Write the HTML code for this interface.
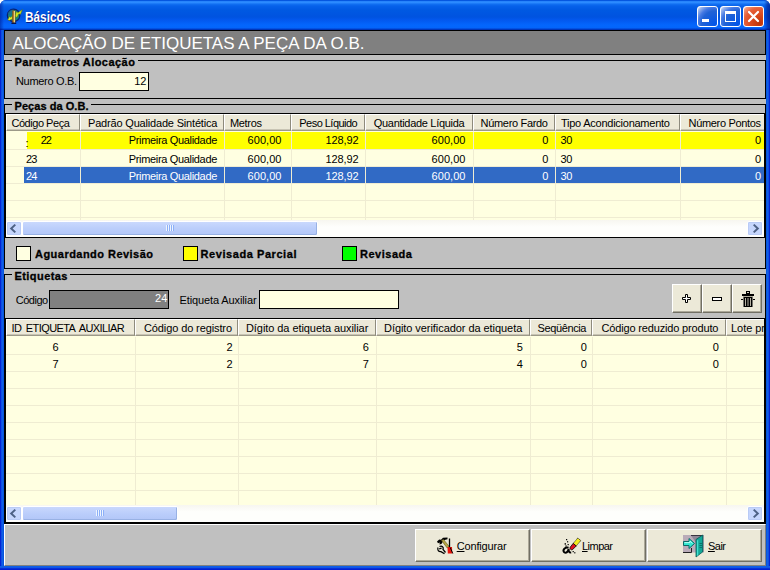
<!DOCTYPE html>
<html><head><meta charset="utf-8"><style>*{box-sizing:border-box;margin:0;padding:0}
html,body{width:770px;height:570px;overflow:hidden;background:#fff;font-family:"Liberation Sans",sans-serif;font-size:11px;color:#000}
div,span,i,svg{position:absolute}
svg{left:0;top:0}
#win{left:0;top:0;width:770px;height:570px;overflow:hidden;border-radius:6px 6px 0 0;background:linear-gradient(90deg,#0019cf 0,#0831d9 1px,#166aee 2px,#0855dd 3px,#0855dd 4px,#0855dd 766px,#0855dd 767px,#166aee 768px,#0831d9 769px,#0019cf 770px)}
#bb{left:0;top:566px;width:770px;height:4px;background:linear-gradient(180deg,#0855dd 0,#166aee 1px,#0831d9 2.5px,#0019cf 4px)}
#tb{left:0;top:0;width:770px;height:30px;
background:linear-gradient(180deg,#0050d8 0,#0a5ee8 1px,#2d8cff 1.6px,#2b8aff 2.8px,#1270f2 4px,#0661ea 6px,#0059e2 10px,#0053e0 17px,#0358ee 20px,#0466fd 25px,#0465fb 27.5px,#0350e0 28.6px,#0038c0 29.4px,#002ca8 30px)}
#tt{left:24.5px;top:9px;color:#fff;font-weight:bold;font-size:14px;line-height:16px;transform:scaleX(.845);transform-origin:0 0;text-shadow:1px 1px 0 #0a1883;white-space:nowrap}
#body{left:4px;top:30px;width:762px;height:536px;background:#c0c0c0}
.wb{top:6px;width:21px;height:21px;border:1px solid #fff;border-radius:3px;
background:radial-gradient(circle at 90% 90%,#0054e9 0,#2263d5 55%,#4479e4 70%,#a3bbec 90%,#fff 100%)}
.wb.x{background:radial-gradient(circle at 80% 85%,#bf3408 0,#dc4a1e 40%,#e6603a 68%,#f29a7c 90%,#fff 100%)}
#banner{left:4px;top:30px;width:762px;height:25px;background:#808080;border:1px solid #000}
#banner span{left:7.5px;top:3px;color:#fff;font-size:17px;letter-spacing:-0.03px;white-space:nowrap}
.ln{background:#000}
.glb{height:5px;background:#c0c0c0}
.t{white-space:nowrap;line-height:13px}
.inp{border:1px solid #000;background:#ffffe1}
.grid{background:#ffffe1;overflow:hidden}
.hd{top:0;height:17px;background:#ece9d8;border:1px solid;border-color:#fff #8e8b7d #9c9988 #fff;box-shadow:inset 0 -1px 0 #c8c4b4}
.vl{width:1px;background:#efecd2}
.hl{height:1px;background:#efecd2;left:0;width:760px}
.btn{background:#ece9d8;border:1px solid;border-color:#fff #716f64 #716f64 #fff;box-shadow:inset -1px -1px 0 #aca899}
.sb{background:linear-gradient(180deg,#f7f6f0 0,#fefefc 40%,#fefefc 100%);height:17px}
.sbb{width:16px;height:15px;top:1px;background:#c6d6fd;border:1px solid #fff;border-radius:2px;box-shadow:inset 0 0 0 1px #b9cbf6}
.th{top:1px;height:15px;background:linear-gradient(180deg,#c9d8fd 0,#bbcefb 50%,#b2c6f8 100%);border:1px solid #fff;border-radius:2px;box-shadow:inset -1px -1px 0 #98b1e4}
.th i{top:3px;width:8px;height:6px;background:repeating-linear-gradient(90deg,#eef4fe 0,#eef4fe 1px,#8cb0f8 1px,#8cb0f8 2px)}
#tbr{left:764px;top:0;width:6px;height:30px;background:linear-gradient(90deg,rgba(0,10,120,0) 0,rgba(0,10,120,.45) 60%,rgba(0,10,110,.6) 100%)}
#tbl{left:0;top:0;width:4px;height:30px;background:linear-gradient(90deg,rgba(0,10,120,.45) 0,rgba(0,10,120,0) 100%)}
</style></head><body>
<div id="win">
<div id="tb"><div id="tbr"></div><div id="tbl"></div><div id="tt">Básicos</div>
<svg style="left:5px;top:7px" width="20" height="18">
<circle cx="8.6" cy="8.4" r="6.2" fill="#14877a" stroke="#0a2070" stroke-width="1.3"/>
<path d="M8.5 2.4 A6.2 6.2 0 0 0 2.6 7 L6 9 Z" fill="#1a6a98" opacity=".7"/>
<path d="M10.2 8.6 L11.2 4.8 L13.2 5.6 L17.4 2.6 L15.6 7.2 L13.6 7 L12.4 9.8 L10.6 10.4 Z" fill="#cfe61e" stroke="#4a6a10" stroke-width=".5"/>
<path d="M2.6 12.8 L4.6 9.4 L5.8 10.6 L7.6 8.6 L7.6 12.2 L5.8 12.4 L4.8 13.6 Z" fill="#e2ee2c" stroke="#4a6a10" stroke-width=".5"/>
<path d="M7.3 3.4 h3 v12.8 h-3 z" fill="#96540f"/><path d="M9.3 4 v12" stroke="#f4e48c" stroke-width="1.2"/>
<path d="M6.4 16.3 h4.8" stroke="#08154a" stroke-width="1.5"/>
</svg>
<div class="wb" style="left:697px"><svg width="19" height="19"><rect x="4" y="12" width="7" height="3" fill="#fff"/></svg></div>
<div class="wb" style="left:720px"><svg width="19" height="19"><rect x="4.5" y="5.5" width="10" height="9" fill="none" stroke="#fff" stroke-width="1"/><rect x="4" y="4" width="11" height="3" fill="#fff"/></svg></div>
<div class="wb x" style="left:743px"><svg width="19" height="19"><path d="M5 5 L14 14 M14 5 L5 14" stroke="#fff" stroke-width="2.2" stroke-linecap="round"/></svg></div>
</div>

<div id="bb"></div><div id="body"></div>
<div id="banner"><span>ALOCAÇÃO DE ETIQUETAS A PEÇA DA O.B.</span></div>
<div class="ln" style="left:4px;top:60px;width:762px;height:1px"></div>
<div class="ln" style="left:4px;top:60px;width:1px;height:39px"></div>
<div class="ln" style="left:765px;top:60px;width:1px;height:39px"></div>
<div class="ln" style="left:4px;top:98px;width:762px;height:1px"></div>
<div class="glb" style="left:12px;top:58px;width:126px"></div>
<span class="t" style="top:56px;letter-spacing:0.46px;left:14.5px;font-weight:bold;-webkit-text-stroke:.3px #000;">Parametros Alocação</span>
<span class="t" style="top:75px;letter-spacing:-0.32px;left:16px;">Numero O.B.</span>
<div class="inp" style="left:79px;top:72px;width:70px;height:19px"></div>
<span class="t" style="top:75px;right:623.50px;">12</span>
<div class="ln" style="left:4px;top:104px;width:762px;height:1px"></div>
<div class="ln" style="left:4px;top:104px;width:1px;height:165px"></div>
<div class="ln" style="left:765px;top:104px;width:1px;height:165px"></div>
<div class="ln" style="left:4px;top:268px;width:762px;height:1px"></div>
<div class="glb" style="left:12px;top:102px;width:79px"></div>
<span class="t" style="top:100px;letter-spacing:0.05px;left:14.5px;font-weight:bold;-webkit-text-stroke:.3px #000;">Peças da O.B.</span>
<div style="left:5px;top:113px;width:760px;height:125px;border:1px solid #000"></div>
<div class="grid" style="left:6px;top:114px;width:758px;height:123px">
<div class="hd" style="left:0px;width:74px"></div>
<div class="hd" style="left:74px;width:144px"></div>
<div class="hd" style="left:218px;width:67px"></div>
<div class="hd" style="left:285px;width:74px"></div>
<div class="hd" style="left:359px;width:108px"></div>
<div class="hd" style="left:467px;width:82px"></div>
<div class="hd" style="left:549px;width:125px"></div>
<div class="hd" style="left:674px;width:85px"></div>
<div style="left:21px;top:18px;width:740px;height:17px;background:#ffff00"></div>
<div style="left:18px;top:53px;width:743px;height:16px;background:#316ac5"></div>
<div class="vl" style="left:74px;top:18px;height:90px"></div>
<div class="vl" style="left:218px;top:18px;height:90px"></div>
<div class="vl" style="left:285px;top:18px;height:90px"></div>
<div class="vl" style="left:359px;top:18px;height:90px"></div>
<div class="vl" style="left:467px;top:18px;height:90px"></div>
<div class="vl" style="left:549px;top:18px;height:90px"></div>
<div class="vl" style="left:674px;top:18px;height:90px"></div>
<div class="hl" style="top:35px"></div>
<div class="hl" style="top:52px"></div>
<div class="hl" style="top:69px"></div>
<div class="hl" style="top:86px"></div>
<div class="hl" style="top:103px"></div>
<div class="sb" style="left:0;top:106px;width:758px"><div class="sbb" style="left:0px"><svg width="14" height="14"><path d="M8.3 2.6 L4.2 6.5 L8.3 10.4" fill="none" stroke="#4d6185" stroke-width="2"/></svg></div><div class="th" style="left:16px;width:296px"><i style="left:143px"></i></div><div class="sbb" style="left:741px"><svg width="14" height="14"><path d="M5.7 2.6 L9.8 6.5 L5.7 10.4" fill="none" stroke="#4d6185" stroke-width="2"/></svg></div></div>
</div>
<span class="t" style="top:117px;letter-spacing:-0.47px;left:11.5px;">Código Peça</span>
<span class="t" style="top:117px;letter-spacing:-0.18px;left:88px;">Padrão Qualidade Sintética</span>
<span class="t" style="top:117px;letter-spacing:-0.33px;left:230px;">Metros</span>
<span class="t" style="top:117px;letter-spacing:-0.53px;left:299.3px;">Peso Líquido</span>
<span class="t" style="top:117px;letter-spacing:-0.31px;left:373.8px;">Quantidade Líquida</span>
<span class="t" style="top:117px;letter-spacing:-0.32px;left:480.6px;">Número Fardo</span>
<span class="t" style="top:117px;letter-spacing:-0.25px;left:561px;">Tipo Acondicionamento</span>
<span class="t" style="top:117px;letter-spacing:-0.34px;left:688.6px;">Número Pontos</span>
<span class="t" style="top:134px;letter-spacing:-0.95px;left:40.7px;">22</span>
<span class="t" style="top:134px;letter-spacing:-0.33px;right:553.03px;">Primeira Qualidade</span>
<span class="t" style="top:134px;letter-spacing:0.06px;right:488.44px;">600,00</span>
<span class="t" style="top:134px;letter-spacing:-0.14px;right:411.64px;">128,92</span>
<span class="t" style="top:134px;letter-spacing:0.06px;right:304.44px;">600,00</span>
<span class="t" style="top:134px;right:221.70px;">0</span>
<span class="t" style="top:134px;letter-spacing:-0.55px;left:560.6px;">30</span>
<span class="t" style="top:134px;right:9.00px;">0</span>
<span class="t" style="top:153px;letter-spacing:-0.95px;left:26px;">23</span>
<span class="t" style="top:153px;letter-spacing:-0.33px;right:553.03px;">Primeira Qualidade</span>
<span class="t" style="top:153px;letter-spacing:0.06px;right:488.44px;">600,00</span>
<span class="t" style="top:153px;letter-spacing:-0.14px;right:411.64px;">128,92</span>
<span class="t" style="top:153px;letter-spacing:0.06px;right:304.44px;">600,00</span>
<span class="t" style="top:153px;right:221.70px;">0</span>
<span class="t" style="top:153px;letter-spacing:-0.55px;left:560.6px;">30</span>
<span class="t" style="top:153px;right:9.00px;">0</span>
<span class="t" style="top:170px;letter-spacing:-0.95px;left:26px;color:#fff;">24</span>
<span class="t" style="top:170px;letter-spacing:-0.33px;right:553.03px;color:#fff;">Primeira Qualidade</span>
<span class="t" style="top:170px;letter-spacing:0.06px;right:488.44px;color:#fff;">600,00</span>
<span class="t" style="top:170px;letter-spacing:-0.14px;right:411.64px;color:#fff;">128,92</span>
<span class="t" style="top:170px;letter-spacing:0.06px;right:304.44px;color:#fff;">600,00</span>
<span class="t" style="top:170px;right:221.70px;color:#fff;">0</span>
<span class="t" style="top:170px;letter-spacing:-0.55px;left:560.6px;color:#fff;">30</span>
<span class="t" style="top:170px;right:9.00px;color:#fff;">0</span>
<span class="t" style="top:137px;left:25.5px;">:</span>
<div style="left:16px;top:246px;width:15px;height:15px;border:1px solid #000;background:#ffffe1"></div>
<span class="t" style="top:248px;letter-spacing:0.47px;left:35px;font-weight:bold;-webkit-text-stroke:.3px #000;">Aguardando Revisão</span>
<div style="left:183px;top:246px;width:15px;height:15px;border:1px solid #000;background:#ffff00"></div>
<span class="t" style="top:248px;letter-spacing:0.56px;left:200.6px;font-weight:bold;-webkit-text-stroke:.3px #000;">Revisada Parcial</span>
<div style="left:342px;top:246px;width:15px;height:15px;border:1px solid #000;background:#00ff00"></div>
<span class="t" style="top:248px;letter-spacing:0.52px;left:360px;font-weight:bold;-webkit-text-stroke:.3px #000;">Revisada</span>
<div class="ln" style="left:4px;top:274px;width:762px;height:1px"></div>
<div class="ln" style="left:4px;top:274px;width:1px;height:250px"></div>
<div class="ln" style="left:765px;top:274px;width:1px;height:250px"></div>
<div class="ln" style="left:4px;top:523px;width:762px;height:1px"></div>
<div class="glb" style="left:12px;top:272px;width:58px"></div>
<span class="t" style="top:270px;letter-spacing:0.43px;left:14.5px;font-weight:bold;-webkit-text-stroke:.3px #000;">Etiquetas</span>
<span class="t" style="top:294px;letter-spacing:-0.50px;left:15.8px;">Código</span>
<div style="left:49px;top:290px;width:120px;height:19px;border:1px solid #000;background:#808080"></div>
<span class="t" style="top:292px;right:602.70px;color:#fff;">24</span>
<span class="t" style="top:294px;letter-spacing:-0.12px;left:179.6px;">Etiqueta Auxiliar</span>
<div class="inp" style="left:259px;top:290px;width:140px;height:19px"></div>
<div class="btn" style="left:672px;top:284px;width:30px;height:29px"></div>
<div class="btn" style="left:702px;top:284px;width:30px;height:29px"></div>
<div class="btn" style="left:732px;top:284px;width:30px;height:29px"></div>
<svg style="left:682px;top:294px" width="10" height="10"><path d="M3.5 .5h2v3h3v2h-3v3h-2v-3h-3v-2h3z" fill="#fff" stroke="#000" stroke-width="1"/></svg>
<svg style="left:712px;top:297px" width="10" height="4"><rect x=".5" y=".5" width="9" height="3" fill="#fff" stroke="#000"/></svg>
<svg style="left:741px;top:290px" width="14" height="18"><rect x="5" y="1" width="4" height="3" fill="#000"/><rect x="6" y="2" width="2" height="1" fill="#d8d4c4"/><rect x="1" y="4" width="12" height="2" fill="#000"/><rect x="2" y="6" width="10" height="1" fill="#b0ac9c"/><rect x="2.5" y="7" width="9" height="10" fill="#000"/><path d="M4.5 8v8M7 8v8M9.5 8v8" stroke="#c8c4b4" stroke-width=".9"/><rect x="0" y="9" width="2" height="1" fill="#000"/><rect x="12" y="9" width="2" height="1" fill="#000"/></svg>

<div style="left:5px;top:318px;width:760px;height:205px;border:1px solid #000"></div>
<div class="grid" style="left:6px;top:319px;width:758px;height:203px">
<div class="hd" style="left:0px;width:129px"></div>
<div class="hd" style="left:129px;width:103px"></div>
<div class="hd" style="left:232px;width:138px"></div>
<div class="hd" style="left:370px;width:154px"></div>
<div class="hd" style="left:524px;width:62px"></div>
<div class="hd" style="left:586px;width:134px"></div>
<div class="hd" style="left:720px;width:39px"></div>
<div class="vl" style="left:129px;top:18px;height:169px"></div>
<div class="vl" style="left:232px;top:18px;height:169px"></div>
<div class="vl" style="left:370px;top:18px;height:169px"></div>
<div class="vl" style="left:524px;top:18px;height:169px"></div>
<div class="vl" style="left:586px;top:18px;height:169px"></div>
<div class="vl" style="left:720px;top:18px;height:169px"></div>
<div class="hl" style="top:35px"></div>
<div class="hl" style="top:52px"></div>
<div class="hl" style="top:69px"></div>
<div class="hl" style="top:86px"></div>
<div class="hl" style="top:103px"></div>
<div class="hl" style="top:120px"></div>
<div class="hl" style="top:137px"></div>
<div class="hl" style="top:154px"></div>
<div class="hl" style="top:171px"></div>
<div class="sb" style="left:0;top:186px;width:758px"><div class="sbb" style="left:0px"><svg width="14" height="14"><path d="M8.3 2.6 L4.2 6.5 L8.3 10.4" fill="none" stroke="#4d6185" stroke-width="2"/></svg></div><div class="th" style="left:16px;width:156px"><i style="left:73px"></i></div><div class="sbb" style="left:741px"><svg width="14" height="14"><path d="M5.7 2.6 L9.8 6.5 L5.7 10.4" fill="none" stroke="#4d6185" stroke-width="2"/></svg></div></div>
</div>
<span class="t" style="top:322px;word-spacing:2px;letter-spacing:-0.58px;left:11.5px;">ID ETIQUETA AUXILIAR</span>
<span class="t" style="top:322px;letter-spacing:-0.11px;left:144px;">Código do registro</span>
<span class="t" style="top:322px;letter-spacing:-0.07px;left:246px;">Dígito da etiqueta auxiliar</span>
<span class="t" style="top:322px;letter-spacing:-0.06px;left:384px;">Dígito verificador da etiqueta</span>
<span class="t" style="top:322px;letter-spacing:-0.38px;left:537.5px;">Seqüência</span>
<span class="t" style="top:322px;letter-spacing:-0.16px;left:601.5px;">Código reduzido produto</span>
<span class="t" style="top:322px;letter-spacing:-0.05px;left:731px;">Lote pr</span>
<span class="t" style="top:341px;left:52.5px;">6</span>
<span class="t" style="top:341px;right:537.50px;">2</span>
<span class="t" style="top:341px;right:401.20px;">6</span>
<span class="t" style="top:341px;right:247.20px;">5</span>
<span class="t" style="top:341px;right:183.20px;">0</span>
<span class="t" style="top:341px;right:51.20px;">0</span>
<span class="t" style="top:358px;left:52.5px;">7</span>
<span class="t" style="top:358px;right:537.50px;">2</span>
<span class="t" style="top:358px;right:401.20px;">7</span>
<span class="t" style="top:358px;right:247.20px;">4</span>
<span class="t" style="top:358px;right:183.20px;">0</span>
<span class="t" style="top:358px;right:51.20px;">0</span>
<div style="left:4px;top:524px;width:762px;height:42px;border:1px solid;border-color:#fff #808080 #808080 #fff"></div>
<div class="btn" style="left:415px;top:529px;width:115px;height:33px"></div>
<span class="t" style="top:540px;letter-spacing:-0.15px;left:456.7px;"><u>C</u>onfigurar</span>
<div class="btn" style="left:531px;top:529px;width:115px;height:33px"></div>
<span class="t" style="top:540px;letter-spacing:-0.53px;left:582px;"><u>L</u>impar</span>
<div class="btn" style="left:647px;top:529px;width:115px;height:33px"></div>
<span class="t" style="top:540px;letter-spacing:-0.52px;left:708px;"><u>S</u>air</span>
<svg style="left:436px;top:536px" width="18" height="19">
<path d="M1 5.6 L3.2 3.4 L5 3.8 L7 1.8 L11.5 1.4 L11.5 3.2 L8.6 4 L7 5.4 L5.4 8 L3.4 8.6 L3.8 6.6 L2 7.2 Z" fill="#000"/>
<path d="M5.5 4.5 L7.5 3.5 L13.2 10.5 L11.2 12 Z" fill="#b5a642" stroke="#5a5220" stroke-width=".6"/>
<path d="M13.5 2.5 V11" stroke="#000" stroke-width="1.3"/>
<path d="M11.5 11 H16 L16.3 17.5 H11.8 Z" fill="#e8140c"/><path d="M14.2 11.5 L16.8 17.5" stroke="#000" stroke-width="1"/>
<path d="M2 11.5 C1.2 14 2.5 15.8 5 15.6 L8.5 17.8 M3.5 10.5 C6 9.5 8 11 7 13.5 L9.5 16.5 M3.2 12.8 L5.6 12.2" fill="none" stroke="#000" stroke-width="1.3"/>
</svg>
<svg style="left:561px;top:536px" width="22" height="19">
<path d="M16.8 2 L19.8 4.6 L15.2 10 L12.2 7.4 Z" fill="#f4ec20" stroke="#000" stroke-width=".8" stroke-dasharray="1 .6"/>
<path d="M12.2 7.4 L15.2 10 L11.6 13.6 C10.4 14.6 8.2 12.6 9.2 11.2 Z" fill="#e01020" stroke="#000" stroke-width=".8"/>
<path d="M7.6 11.6 C3.6 10.6 1.4 14.6 3.2 16.2 C5.2 17.6 7.2 15.6 7.6 13 C7.6 15.4 8 16.6 10.2 16.4" fill="none" stroke="#000" stroke-width="2"/>
<rect x="5" y="3" width="1.2" height="1.2" fill="#000"/><rect x="6" y="5.2" width="1.2" height="1.2" fill="#000"/><rect x="3.6" y="7.2" width="1.4" height="1.4" fill="#000"/><rect x="6.6" y="8" width="1.2" height="1.2" fill="#000"/><rect x="4.4" y="9.4" width="1.3" height="1.3" fill="#000"/>
<rect x="11.6" y="15" width="1.2" height="1.2" fill="#000"/><rect x="13.2" y="16.2" width="1.2" height="1.2" fill="#000"/>
</svg>
<svg style="left:682px;top:534px" width="23" height="24">
<rect x="1" y="1" width="21" height="17.5" fill="#b9abb9"/>
<path d="M9 1.5 H20.5 V18" fill="#8f8896" stroke="#3a3440" stroke-width="1"/>
<path d="M1 18.5 H9.5 V14" fill="none" stroke="#222" stroke-width="1"/>
<path d="M14 5.5 L20.8 1 V17.8 L14 23 Z" fill="#12a898" stroke="#0a5a55" stroke-width=".8"/>
<path d="M15 6.5 L16.2 5.8 V21 L15 22 Z" fill="#40e0d0"/>
<path d="M17.5 9.5h2.5M17.5 11.5h2.5M17.5 13.5h2.5" stroke="#0a5a55" stroke-width=".7"/>
<path d="M1.5 7.5 H7 V4.5 L12.5 9.5 L7 14.5 V11.5 H1.5 Z" fill="#30e8d0" stroke="#0a6a66" stroke-width="1"/>
<path d="M2.5 8.6 H8 V7 L10.5 9.4" fill="none" stroke="#b8fff4" stroke-width="1"/>
</svg>

</div>
</body></html>
